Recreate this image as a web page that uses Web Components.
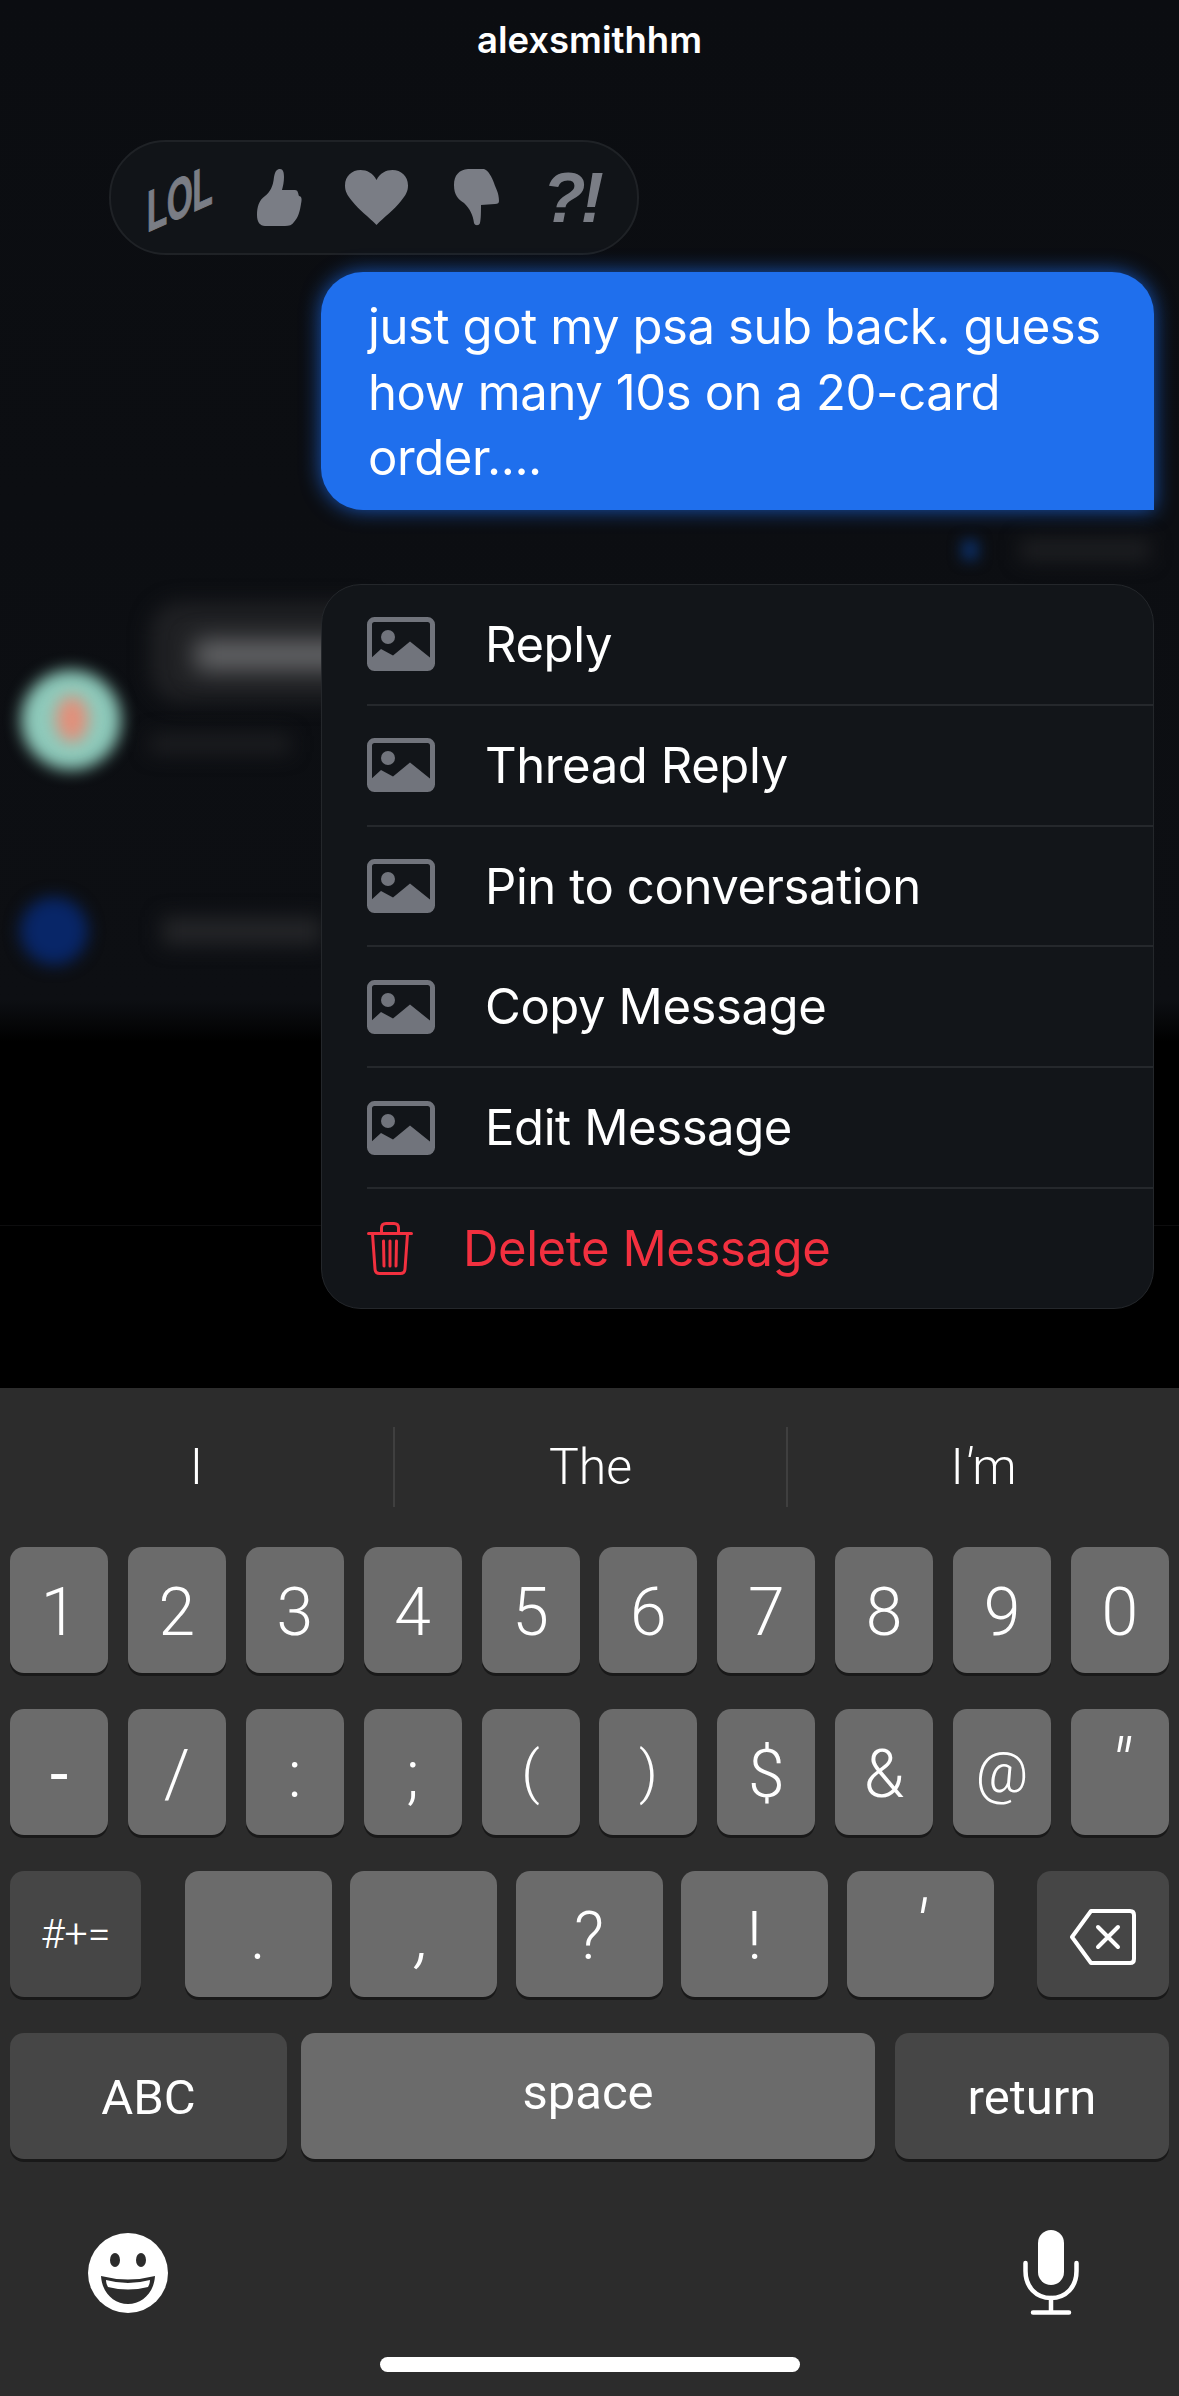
<!DOCTYPE html>
<html>
<head>
<meta charset="utf-8">
<title>alexsmithhm</title>
<style>
   html, body { margin: 0; padding: 0; background: #000; }
   body { width: 1179px; height: 2396px; overflow: hidden; font-family: Inter, "Liberation Sans", sans-serif; color: #fff; }
</style>
</head>
<body>

<chat-screen>
   <chat-pane>
      <blur-backdrop slot="back"></blur-backdrop>
      <chat-title>alexsmithhm</chat-title>
      <reaction-bar></reaction-bar>
      <message-bubble>just got my psa sub back. guess how many 10s on a 20-card order....</message-bubble>
      <context-menu>
         <menu-item>Reply</menu-item>
         <menu-item>Thread Reply</menu-item>
         <menu-item>Pin to conversation</menu-item>
         <menu-item>Copy Message</menu-item>
         <menu-item>Edit Message</menu-item>
         <menu-item danger>Delete Message</menu-item>
      </context-menu>
   </chat-pane>
   <keyboard-panel></keyboard-panel>
</chat-screen>

<script>
const 
   IMG_ICON = `<svg width="68" height="54" viewBox="0 0 68 54">
      <rect x="2.5" y="2.5" width="63" height="49" rx="5" fill="none" stroke="#71747c" stroke-width="5"/>
      <circle cx="21" cy="20" r="7" fill="#71747c"/>
      <path d="M2 43 L14 32 L26 38.500 L43 24.500 L66 43 V50 Q66 52 63 52 H5 Q2 52 2 50 Z" fill="#71747c"/>
   </svg>`,
   TRASH_ICON = `<svg width="46" height="53" viewBox="0 0 46 53" fill="none" stroke="#f2303f" stroke-width="3" stroke-linecap="round" stroke-linejoin="round">
      <path d="M1.500 11.500 H44.500"/>
      <path d="M14.500 11 V6 Q14.500 1.500 19 1.500 H27 Q31.500 1.500 31.500 6 V11"/>
      <path d="M5.500 12 L8 47 Q8.300 51.500 12.500 51.500 H33.500 Q37.700 51.500 38 47 L40.500 12"/>
      <path d="M16.500 19 L17 44 M23 19 V44 M29.500 19 L29 44"/>
   </svg>`
;

const def = ( name, html ) => {
   customElements.define( name, class extends HTMLElement {
      constructor() {
         super();
         const tpl = document.createElement( "template" );
         tpl.innerHTML = html;
         this.attachShadow( { mode: "open" } );
         this.shadowRoot.append( tpl.content.cloneNode( true ) );
      }
   } );
};

def( "chat-screen", `
   <style>
      :host { display: flex; flex-direction: column; width: 1179px; height: 2396px; }
   </style>
   <slot></slot>
` );

def( "chat-pane", `
   <style>
      :host {
         display: flex; flex-direction: column; position: relative;
         height: 1388px; box-sizing: border-box; overflow: hidden;
         background: linear-gradient( #0b0d11 0, #0d0f13 1000px, #000 1042px );
      }
   </style>
   <slot name="back"></slot>
   <slot></slot>
` );

/* everything behind the menu is blurred out, no readable content there */
def( "blur-backdrop", `
   <style>
      :host { position: absolute; inset: 0; display: block; }
      div { position: absolute; }
      .incoming { left: 150px; top: 602px; width: 240px; height: 100px; border-radius: 30px; background: #1f2023; filter: blur( 10px ); }
      .incoming-text { left: 195px; top: 640px; width: 200px; height: 30px; background: #666769; filter: blur( 12px ); }
      .stamp { left: 150px; top: 735px; width: 140px; height: 18px; background: #1e1f22; filter: blur( 10px ); }
      .avatar { left: 21px; top: 670px; width: 100px; height: 100px; border-radius: 50%; background: #8ecabb; filter: blur( 8px ); }
      .avatar-core { left: 56px; top: 696px; width: 32px; height: 46px; border-radius: 50%; background: #e28f7a; filter: blur( 8px ); }
      .plus { left: 20px; top: 897px; width: 68px; height: 68px; border-radius: 50%; background: #082668; filter: blur( 8px ); }
      .input-text { left: 162px; top: 917px; width: 160px; height: 28px; background: #242528; filter: blur( 10px ); }
      .check { left: 962px; top: 540px; width: 16px; height: 20px; background: #0c3068; filter: blur( 7px ); }
      .time { left: 1020px; top: 540px; width: 130px; height: 20px; background: #1f2023; filter: blur( 10px ); }
      .rule { left: 0; right: 0; top: 1225px; height: 1px; background: #0d0d0e; }
   </style>
   <div class="incoming"></div><div class="incoming-text"></div><div class="stamp"></div>
   <div class="avatar"></div><div class="avatar-core"></div>
   <div class="plus"></div><div class="input-text"></div>
   <div class="check"></div><div class="time"></div>
   <div class="rule"></div>
` );

def( "chat-title", `
   <style>
      :host { display: block; position: relative; height: 140px; box-sizing: border-box; padding-top: 20px; text-align: center; font-size: 36.500px; line-height: 40px; font-weight: 600; }
   </style>
   <slot></slot>
` );

def( "reaction-bar", `
   <style>
      :host {
         display: grid; grid-template-columns: repeat( 5, 98.500px ); align-items: center; justify-items: center;
         position: relative; box-sizing: border-box;
         width: 530px; height: 115px; margin-left: 109px; padding-left: 21px;
         background: #111418; border: 2px solid #1f2226; border-radius: 57px;
         color: #7a7d85;
      }
      .lol {
         margin-left: -4px;
         font: 700 58px/1 "Liberation Sans", sans-serif; letter-spacing: -1px;
         transform: skewY( -24deg ) scaleX( .58 );
         -webkit-text-stroke: 1px #7a7d85;
      }
      .what {
         margin-left: -9px;
         font: italic 700 70px/1 "Liberation Sans", sans-serif; letter-spacing: -5px;
      }
      .heart { margin-left: -4px; }
      svg { display: block; fill: #7a7d85; }
   </style>
   <span class="lol">LOL</span>
   <svg width="45" height="57" viewBox="0 0 45 57"><path d="M8 57 C3 57 0 53 0 46 C0 38 2 31 8 27 C13 23 16 18 17 8 C18 2 20 0 23 0 C26 0 27 3 27 8 C27 13 26 17 25 21 L38 21 C41 21 41 24 42 27 C45 27 45 31 44 35 C43 42 41 49 37 53 C35 56 32 57 28 57 Z"/></svg>
   <svg class="heart" width="63" height="55" viewBox="0 0 63 55"><path d="M31.500 55 C24 47 14 40 7 31 C2 25 0 21 0 15.500 C0 6 7 0 15.500 0 C22 0 28 3 31.500 10 C35 3 41 0 47.500 0 C56 0 63 6 63 15.500 C63 21 61 25 56 31 C49 40 39 47 31.500 55 Z"/></svg>
   <svg width="45" height="57" viewBox="0 0 45 57"><path d="M14 0 L30 0 C34 1 38 8 40 14 C42 20 45 24 45 32 C45 34 44 35 41 35 L27 36 C27 42 27 50 26 54 C25 57 21 57 20 54 C19 46 16 40 10 34 C4 30 0 26 0 16 C0 6 5 1 14 0 Z"/></svg>
   <span class="what">?!</span>
` );

def( "message-bubble", `
   <style>
      :host {
         display: block; position: relative; box-sizing: border-box;
         width: 833px; height: 238px; margin: 17px 25px 74px auto; padding: 22px 25px 0 47px;
         background: #1f6fed; color: #fff;
         border-radius: 42px 42px 0 42px;
         box-shadow: 0 0 20px rgba( 28, 110, 240, .75 );
         font-size: 49px; line-height: 65.500px; letter-spacing: -.4px; font-weight: 380;
      }
   </style>
   <slot></slot>
` );

def( "context-menu", `
   <style>
      :host {
         display: flex; flex-direction: column; position: relative; box-sizing: border-box;
         width: 833px; height: 725px; margin-left: 321px;
         background: #121519; border: 1px solid #24272b; border-radius: 40px;
      }
   </style>
   <slot></slot>
` );

class MenuItem extends HTMLElement {
   constructor() {
      super();
      const danger = this.hasAttribute( "danger" );
      this.attachShadow( { mode: "open" } );
      this.shadowRoot.innerHTML = `
         <style>
            :host { display: block; flex: 1; margin-left: 45px; border-bottom: 2px solid #25282c; }
            :host( :last-child ) { border-bottom: 0; }
            :host( [danger] ) { color: #f2303f; }
            div { display: flex; align-items: center; height: 100%; gap: 50px; font-size: 49px; letter-spacing: -.4px; font-weight: 380; }
            svg { display: block; flex: none; }
         </style>
         <div>${ danger ? TRASH_ICON : IMG_ICON }<span><slot></slot></span></div>
      `;
   }
}
customElements.define( "menu-item", MenuItem );

def( "key-cap", `
   <style>
      :host {
         display: flex; align-items: center; justify-content: center; box-sizing: border-box;
         height: 126px; padding-top: 5px;
         background: #6b6b6b; border-radius: 14px;
         box-shadow: 0 3px 0 #191919;
         font: 300 66px/1 Roboto, "Liberation Sans", sans-serif; color: #fff;
      }
      :host( [dark] ) { background: #464646; }
      :host( [small] ) { font-size: 41px; padding-top: 0; }
      :host( [word] ) { font-size: 49px; font-weight: 370; padding-top: 3px; }
      :host( [raised] ) { padding-top: 0; padding-bottom: 8px; }
      :host( [slant] ) { font-style: italic; font-size: 72px; padding-top: 0; padding-bottom: 12px; }
      :host( [low] ) { padding-bottom: 0; padding-top: 3px; }
      :host( [tight] ) { font-size: 58px; padding-top: 0; }
      :host( [heavy] ) { font-weight: 400; }
   </style>
   <slot></slot>
` );

def( "keyboard-panel", `
   <style>
      :host { display: block; flex: 1; position: relative; background: #2c2c2c; }
      .suggest { display: grid; grid-template-columns: repeat( 3, 1fr ); height: 75px; margin-top: 39px; font: 300 50px/80px Roboto, "Liberation Sans", sans-serif; text-align: center; }
      .suggest div + div { border-left: 2px solid #3f3f3f; }
      .suggest i { font-style: italic; }
      .rows { display: flex; flex-direction: column; gap: 36px; margin-top: 45px; padding: 0 10px; }
      .num { display: grid; grid-template-columns: repeat( 10, 98px ); justify-content: space-between; }
      .sym { display: flex; justify-content: space-between; }
      .sym > key-cap { width: 131px; }
      .sym > key-cap:last-child { width: 132px; }
      .mid { display: flex; gap: 18.500px; }
      .mid key-cap { width: 147px; }
      .bot { display: flex; justify-content: space-between; }
      .bot > :nth-child( 1 ) { width: 277px; }
      .bot > :nth-child( 2 ) { width: 574px; margin-left: 14px; }
      .bot > :nth-child( 3 ) { width: 274px; margin-left: 20px; }
      .tools { display: flex; justify-content: space-between; align-items: center; height: 85px; margin-top: 71px; padding: 0 100px 0 88px; }
      .home { width: 420px; height: 15px; margin: 42px auto 0; border-radius: 8px; background: #fff; }
      svg { display: block; }
   </style>
   <div class="suggest"><div>I</div><div>The</div><div>I<i>'</i>m</div></div>
   <div class="rows">
      <div class="num">
         <key-cap>1</key-cap><key-cap>2</key-cap><key-cap>3</key-cap><key-cap>4</key-cap><key-cap>5</key-cap>
         <key-cap>6</key-cap><key-cap>7</key-cap><key-cap>8</key-cap><key-cap>9</key-cap><key-cap>0</key-cap>
      </div>
      <div class="num">
         <key-cap heavy>-</key-cap><key-cap>/</key-cap><key-cap>:</key-cap><key-cap>;</key-cap><key-cap tight>(</key-cap>
         <key-cap tight>)</key-cap><key-cap>$</key-cap><key-cap>&amp;</key-cap><key-cap tight>@</key-cap><key-cap slant>"</key-cap>
      </div>
      <div class="sym">
         <key-cap dark small>#+=</key-cap>
         <div class="mid">
            <key-cap>.</key-cap><key-cap slant low>,</key-cap><key-cap>?</key-cap><key-cap>!</key-cap><key-cap slant>'</key-cap>
         </div>
         <key-cap dark>
            <svg width="66" height="56" viewBox="0 0 66 56" fill="none" stroke="#fff" stroke-width="4" stroke-linejoin="round" stroke-linecap="round">
               <path d="M21 2 H60 Q64 2 64 6 V50 Q64 54 60 54 H21 L2 28 Z"/>
               <path d="M28 18 L48 38 M48 18 L28 38"/>
            </svg>
         </key-cap>
      </div>
      <div class="bot">
         <key-cap dark word>ABC</key-cap>
         <key-cap word raised>space</key-cap>
         <key-cap dark word>return</key-cap>
      </div>
   </div>
   <div class="tools">
      <svg width="80" height="80" viewBox="0 0 80 80">
         <circle cx="40" cy="40" r="40" fill="#fff"/>
         <ellipse cx="27" cy="27" rx="5" ry="7" fill="#2c2c2c"/>
         <ellipse cx="53" cy="27" rx="5" ry="7" fill="#2c2c2c"/>
         <path d="M13 43 Q40 50 67 43 C66 60 54 71 40 71 C26 71 14 60 13 43 Z" fill="#2c2c2c"/>
         <path d="M18 47 Q40 53 62 47 C62 50 61 52 60 54 Q40 59 20 54 C19 52 18 50 18 47 Z" fill="#fff"/>
      </svg>
      <svg width="56" height="85" viewBox="0 0 56 85" fill="none" stroke="#fff" stroke-width="4.500">
         <rect x="15" y="0" width="26" height="55" rx="13" fill="#fff" stroke="none"/>
         <path d="M2.500 33 V41 C2.500 57 13 68 28 68 C43 68 53.500 57 53.500 41 V33" stroke-linecap="round"/>
         <path d="M28 68 V82 M10 82.500 H46" stroke-linecap="round"/>
      </svg>
   </div>
   <div class="home"></div>
` );
</script>
</body>
</html>
